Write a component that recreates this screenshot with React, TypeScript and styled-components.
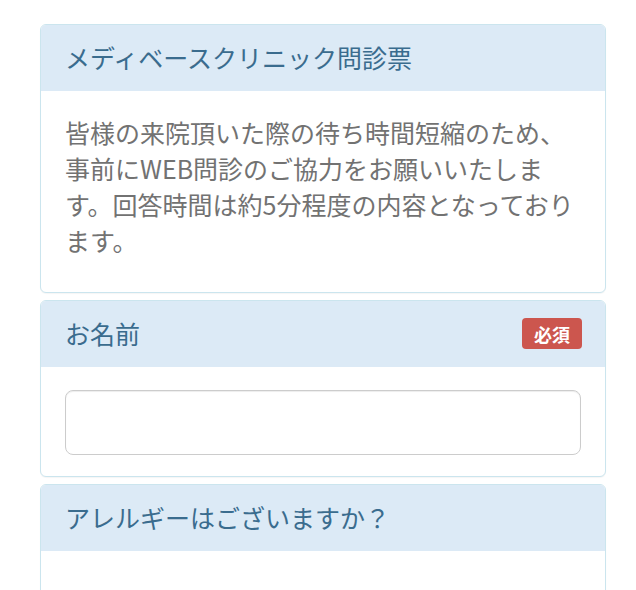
import React from "react";
import styled, { createGlobalStyle } from "styled-components";

const GlobalStyle = createGlobalStyle`
  html,
  body {
    margin: 0;
    padding: 0;
    background: #ffffff;
  }

  body {
    font-family: "Noto Sans CJK JP", "Noto Sans", sans-serif;
  }
`;

interface IPanel {
  title: string;
  required?: boolean;
  children?: React.ReactNode;
}

const Panel = ({ title, required, children }: IPanel) => (
  <StyledPanel>
    <PanelHeading>
      <PanelTitle>{title}</PanelTitle>
      {required === true && <RequiredBadge>必須</RequiredBadge>}
    </PanelHeading>
    <PanelBody>{children}</PanelBody>
  </StyledPanel>
);

export default function App() {
  return (
    <>
      <GlobalStyle />
      <Page>
        <Panel title="メディベースクリニック問診票">
          <Intro>
            皆様の来院頂いた際の待ち時間短縮のため、事前にWEB問診のご協力をお願いいたします。回答時間は約5分程度の内容となっております。
          </Intro>
        </Panel>
        <Panel title="お名前" required>
          <TextInput type="text" />
        </Panel>
        <Panel title="アレルギーはございますか？">
          <EmptyBody />
        </Panel>
      </Page>
    </>
  );
}

const Page = styled.div`
  display: flex;
  flex-direction: column;
  gap: 7px;
  width: 566px;
  padding: 24px 0 0 40px;
`;

const StyledPanel = styled.section`
  display: flex;
  flex-direction: column;
  border: 1px solid #cbe5ee;
  border-radius: 6px;
  background: #ffffff;
  box-shadow: 0 1px 1px rgba(0, 0, 0, 0.04);
  overflow: hidden;
`;

const PanelHeading = styled.div`
  display: flex;
  justify-content: space-between;
  align-items: center;
  height: 65px;
  padding: 0 23px 0 24px;
  background: #dceaf6;
  border-bottom: 1px solid #dceaf6;
`;

const PanelTitle = styled.h3`
  margin: 0;
  font-size: 25px;
  font-weight: 400;
  line-height: 1.1;
  color: #3a6c8e;
`;

const RequiredBadge = styled.span`
  display: inline-flex;
  align-items: center;
  justify-content: center;
  width: 60px;
  height: 31px;
  border-radius: 4px;
  background: #cc564e;
  color: #ffffff;
  font-size: 18px;
  font-weight: 700;
`;

const PanelBody = styled.div`
  padding: 23px 24px 21px;
`;

const Intro = styled.p`
  margin: 0 0 13px;
  font-size: 25px;
  line-height: 36px;
  color: #727272;
`;

const TextInput = styled.input`
  display: block;
  box-sizing: border-box;
  width: 100%;
  height: 65px;
  padding: 8px 16px;
  border: 1px solid #cccccc;
  border-radius: 8px;
  box-shadow: inset 0 1px 1px rgba(0, 0, 0, 0.075);
  font-size: 25px;
  font-family: inherit;
  color: #555555;
  outline: none;
`;

const EmptyBody = styled.div`
  height: 80px;
`;
